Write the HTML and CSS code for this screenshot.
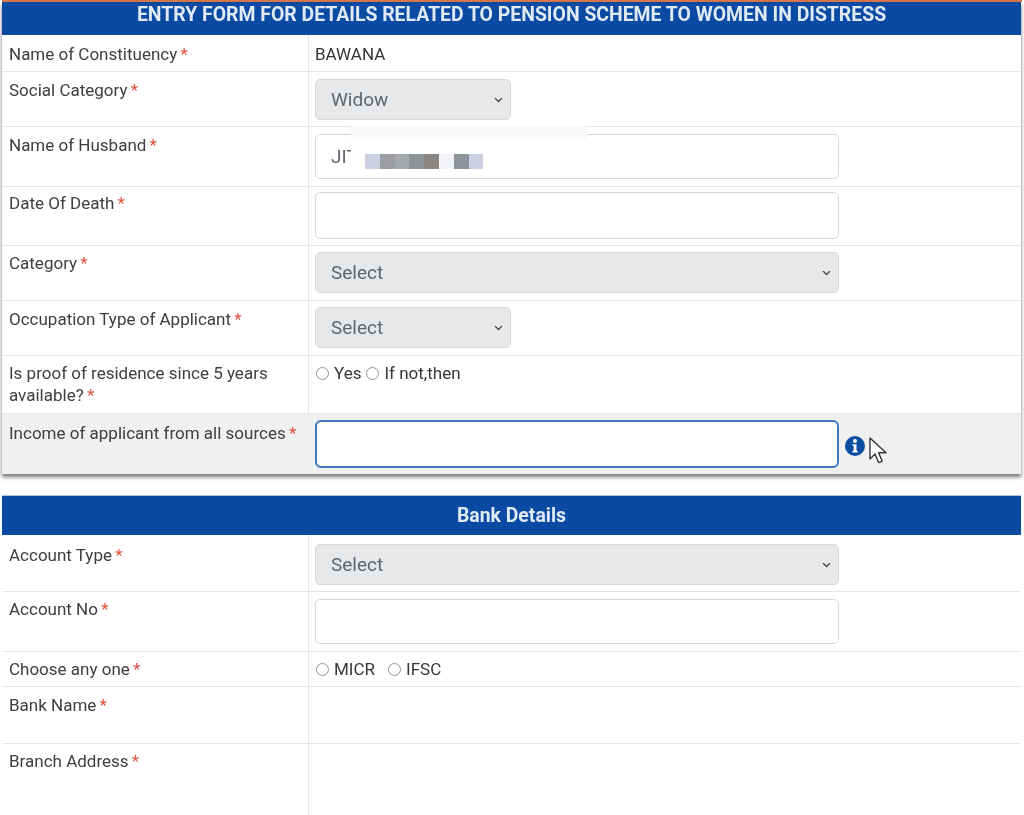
FILE: index.html
```html
<!DOCTYPE html>
<html lang="en">
<head>
    <meta charset="UTF-8">
    <meta name="viewport" content="width=device-width, initial-scale=1.0">
    <title>Entry Form</title>
    <link rel="stylesheet" href="styles.css">
</head>
<body>
    <div class="top-line"></div>
    <section class="card card-main">
        <h2 class="card-title">ENTRY FORM FOR DETAILS RELATED TO PENSION SCHEME TO WOMEN IN DISTRESS</h2>
        <div class="row row-37">
            <div class="label label-down1">Name of Constituency <span class="req">*</span></div>
            <div class="value static">BAWANA</div>
        </div>
        <div class="row row-55">
            <div class="label">Social Category <span class="req">*</span></div>
            <div class="value">
                <select class="field select-short" disabled><option>Widow</option></select>
            </div>
        </div>
        <div class="row row-60">
            <div class="label">Name of Husband <span class="req">*</span></div>
            <div class="value">
                <div class="masked">
                    <input class="field" type="text" value="JIT">
                    <div class="mask-white"></div>
                    <div class="mosaic">
                        <i class="m1"></i><i class="m2"></i><i class="m3"></i><i class="m4"></i><i class="m5"></i><i class="m6"></i><i class="m7"></i><i class="m1"></i>
                    </div>
                </div>
            </div>
        </div>
        <div class="row row-59">
            <div class="label label-up2">Date Of Death <span class="req">*</span></div>
            <div class="value value-5"><input class="field field-tall" type="text"></div>
        </div>
        <div class="row row-55">
            <div class="label label-up1">Category <span class="req">*</span></div>
            <div class="value value-6">
                <select class="field" disabled><option>Select</option></select>
            </div>
        </div>
        <div class="row row-55">
            <div class="label">Occupation Type of Applicant <span class="req">*</span></div>
            <div class="value value-6">
                <select class="field select-short" disabled><option>Select</option></select>
            </div>
        </div>
        <div class="row row-58">
            <div class="label label-up1">Is proof of residence since 5 years<br>available? <span class="req">*</span></div>
            <div class="value radios">
                <label class="radio"><span class="dot"></span>Yes</label>
                <label class="radio"><span class="dot"></span>If not,then</label>
            </div>
        </div>
        <div class="row row-last">
            <div class="label label-down1">Income of applicant from all sources <span class="req">*</span></div>
            <div class="value value-6 value-info">
                <input class="field field-focus" type="text">
                <svg class="info" viewBox="0 0 20 20" width="20" height="20">
                    <circle cx="10" cy="10" r="10" fill="#0b4ea2"/>
                    <circle cx="10" cy="5" r="2" fill="#fff"/>
                    <path d="M7.5 8.2h4v6.6h1.2v1.6H7.4v-1.6h1.3v-5H7.5z" fill="#fff"/>
                </svg>
                <svg class="cursor" viewBox="0 0 18 28" width="18" height="28">
                    <path d="M1 1v21l5-5 3.6 8.6 3.6-1.5-3.6-8.4H17z" fill="#fff" stroke="#33383d" stroke-width="1.4" stroke-linejoin="round"/>
                </svg>
            </div>
        </div>
    </section>

    <section class="card card-bank">
        <h2 class="card-title title-bank">Bank Details</h2>
        <div class="row row-57">
            <div class="label label-down2">Account Type <span class="req">*</span></div>
            <div class="value value-9">
                <select class="field" disabled><option>Select</option></select>
            </div>
        </div>
        <div class="row row-60">
            <div class="label label-up1">Account No <span class="req">*</span></div>
            <div class="value"><input class="field" type="text"></div>
        </div>
        <div class="row row-35">
            <div class="label label-up1">Choose any one <span class="req">*</span></div>
            <div class="value radios radios-wide">
                <label class="radio"><span class="dot"></span>MICR</label>
                <label class="radio"><span class="dot"></span>IFSC</label>
            </div>
        </div>
        <div class="row row-57">
            <div class="label">Bank Name <span class="req">*</span></div>
            <div class="value"></div>
        </div>
        <div class="row row-72">
            <div class="label label-up1">Branch Address <span class="req">*</span></div>
            <div class="value"></div>
        </div>
    </section>
</body>
</html>
```

FILE: styles.css
```css
html, body {
    height: 815px;
    overflow: hidden;
}
body {
    margin: 0;
    background-color: #fff;
    font-family: Roboto, 'Liberation Sans', sans-serif;
    font-size: 17px;
    color: #3c4043;
}
.top-line {
    height: 2px;
    background: #d9784a;
    margin: 0 2px;
}
.card {
    margin: 0 3px 0 2px;
    filter: blur(0.35px);
}
.card-main {
    height: 472px;
    box-shadow: 0 3px 4px rgba(0, 0, 0, 0.55);
}
.card-bank {
    margin-top: 21px;
    border-top: 1px solid #a9c3e2;
}
.card-title {
    margin: 0;
    height: 33px;
    line-height: 25px;
    background: #0b4aa2;
    color: #dfeaf5;
    font-size: 19.4px;
    font-weight: 700;
    text-align: center;
    white-space: nowrap;
}
.title-bank {
    height: 39px;
    line-height: 40px;
}
.row {
    display: grid;
    grid-template-columns: 306px 1fr;
    box-sizing: border-box;
    border-bottom: 1px solid #e6e6e6;
}
.row-35 { height: 35px; }
.row-37 { height: 37px; }
.row-55 { height: 55px; }
.row-57 { height: 57px; }
.row-58 { height: 58px; }
.row-59 { height: 59px; }
.row-60 { height: 60px; }
.row-72 { height: 72px; border-bottom: none; }
.row-last {
    height: 60px;
    background: #f0f0f0;
    border-bottom: none;
}
.label {
    padding: 7px 7px 0;
    line-height: 22px;
}
.label-up1 { padding-top: 6px; }
.label-up2 { padding-top: 5px; }
.label-down1 { padding-top: 8px; }
.label-down2 { padding-top: 9px; }
.req {
    color: #e2503f;
    margin-left: -1px;
}
.value {
    border-left: 1px solid #e6e6e6;
    padding: 7px 6px 0;
}
.value-5 { padding-top: 5px; }
.value-6 { padding-top: 6px; }
.value-9 { padding-top: 9px; }
.row-last .value {
    border-left-color: transparent;
}
.static {
    padding-top: 8px;
    line-height: 22px;
    color: #33373a;
}
.field {
    display: block;
    box-sizing: border-box;
    width: 524px;
    height: 45px;
    padding: 0 15px;
    border: 1px solid #d4d8dc;
    border-radius: 5px;
    background-color: #fff;
    font-family: inherit;
    font-size: 19px;
    color: #5f666d;
    outline: none;
}
.field-tall {
    height: 47px;
}
select.field {
    height: 41px;
    appearance: none;
    background-color: #e6e8ea;
    opacity: 1;
    background-image: url("data:image/svg+xml,%3Csvg xmlns='http://www.w3.org/2000/svg' viewBox='0 0 16 16'%3E%3Cpath d='M3 6l5 5 5-5' fill='none' stroke='%23444' stroke-width='2'/%3E%3C/svg%3E");
    background-repeat: no-repeat;
    background-position: right 6px center;
    background-size: 11px 11px;
}
.select-short {
    width: 196px;
}
.masked {
    position: relative;
    width: 524px;
}
.mask-white {
    position: absolute;
    left: 36px;
    top: -8px;
    width: 236px;
    height: 28px;
    background: linear-gradient(#fafafa 14px, #fff 14px);
}
.mosaic {
    position: absolute;
    left: 36px;
    top: 20px;
    display: flex;
    background: #fff;
    padding: 0 26px 0 14px;
}
.mosaic i {
    display: block;
    width: 14.8px;
    height: 15px;
}
.m1 { background: #ccd0e2; }
.m2 { background: #9c9da3; }
.m3 { background: #a6a9ad; }
.m4 { background: #8f9296; }
.m5 { background: #8a8683; }
.m6 { background: #f2f3f6; }
.m7 { background: #8f949c; }
.radios {
    display: flex;
    align-items: flex-start;
    gap: 5px;
    padding: 6px 6px 0 7px;
    line-height: 22px;
    color: #33373a;
}
.radios-wide {
    gap: 13px;
}
.radio {
    display: flex;
    align-items: center;
    gap: 5px;
}
.dot {
    display: block;
    box-sizing: border-box;
    width: 13px;
    height: 13px;
    border: 1px solid #8f9499;
    border-radius: 50%;
    background: #fff;
}
.value-info {
    display: flex;
    align-items: flex-start;
    gap: 6px;
    position: relative;
}
.field-focus {
    height: 48px;
    border: 2px solid #3f78b8;
    border-radius: 6px;
    flex: none;
}
.info {
    margin-top: 16px;
}
.cursor {
    position: absolute;
    left: 560px;
    top: 23px;
}
```
